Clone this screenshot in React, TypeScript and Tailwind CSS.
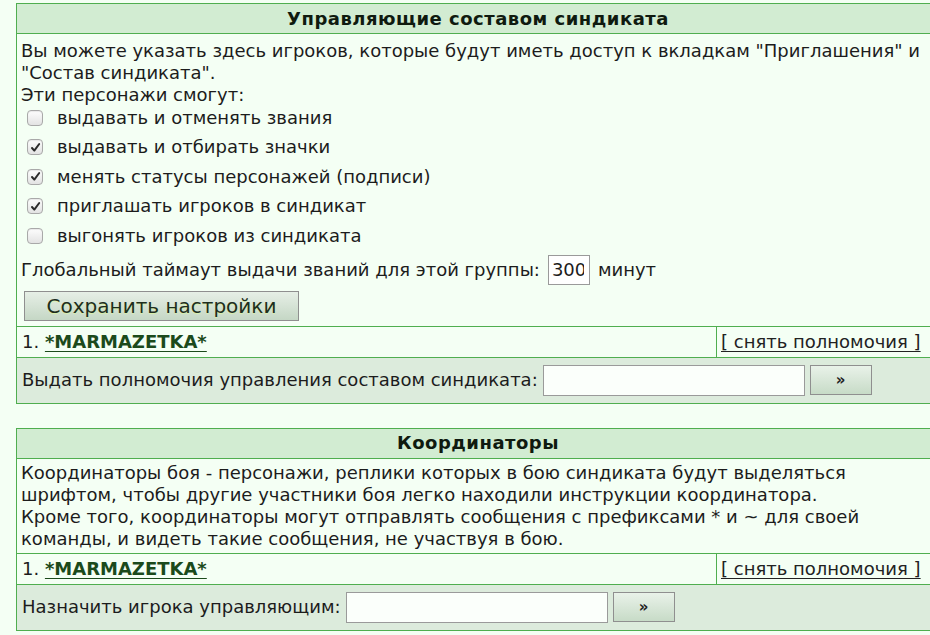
import React from "react";

const checks = [
  { label: "выдавать и отменять звания", on: false },
  { label: "выдавать и отбирать значки", on: true },
  { label: "менять статусы персонажей (подписи)", on: true },
  { label: "приглашать игроков в синдикат", on: true },
  { label: "выгонять игроков из синдиката", on: false },
];

const Checkbox = ({ on }: { on: boolean }) => (
  <span className="relative flex h-[16px] w-[16px] shrink-0 items-center justify-center rounded-[4px] border border-[#a9a9a9] bg-gradient-to-b from-[#fdfdfd] to-[#e3e3e3] shadow-[inset_0_1px_1px_rgba(0,0,0,0.08)]">
    {on && (
      <svg width="11" height="11" viewBox="0 0 11 11">
        <path
          d="M2 6 L4.3 8.6 L9.2 2"
          fill="none"
          stroke="#2b2b2b"
          strokeWidth="2"
          strokeLinecap="round"
          strokeLinejoin="round"
        />
      </svg>
    )}
  </span>
);

const Header = ({ title }: { title: string }) => (
  <div className="flex h-[30px] items-center justify-center border-b border-[#4fae4f] bg-[#d2ecd2] font-bold tracking-[0.5px] text-[#0f1a0f]">
    {title}
  </div>
);

const MemberRow = () => (
  <div className="flex h-[31px] border-b border-[#4fae4f]">
    <div className="flex flex-1 items-center border-r border-[#4fae4f] pl-[5px]">
      1.&nbsp;
      <a href="#" className="font-bold text-[#1b4a1b] underline underline-offset-[3px]">
        *MARMAZETKA*
      </a>
    </div>
    <div className="flex w-[222px] items-center pl-[4px]">
      <a href="#" className="whitespace-pre text-[#222] underline underline-offset-[3px]">
        [ снять полномочия ]
      </a>
    </div>
  </div>
);

const AddRow = ({ label }: { label: string }) => (
  <div className="flex h-[45px] items-center bg-[#dcebdc] pl-[5px]">
    <span>{label}</span>
    <span className="ml-[5px] h-[31px] w-[262px] border border-[#9a9a9a] bg-[#fbfffb]" />
    <button className="ml-[5px] flex h-[30px] w-[62px] items-center justify-center border border-[#8f8f8f] bg-gradient-to-b from-[#e9f2e9] to-[#c7dbc7] text-[15px] font-bold text-[#222]">
      »
    </button>
  </div>
);

export default function App() {
  return (
    <div
      className="min-h-[635px] overflow-hidden bg-[#f4fff4] pt-[3px] text-[18px] leading-[22px] text-[#1c1c1c]"
      style={{ fontFamily: '"DejaVu Sans", Verdana, sans-serif' }}
    >
      {/* Управляющие */}
      <div className="ml-[16px] w-[924px] border border-[#4fae4f]">
        <Header title="Управляющие составом синдиката" />
        <div className="border-b border-[#4fae4f] pb-[5px] pl-[4px] pr-[10px] pt-[6px]">
          <p>
            Вы можете указать здесь игроков, которые будут иметь доступ к вкладкам "Приглашения" и
            "Состав синдиката".
          </p>
          <p>Эти персонажи смогут:</p>
          <div className="-mt-[3px] flex flex-col">
            {checks.map((c) => (
              <div key={c.label} className="flex h-[29.5px] items-center gap-[14px] pl-[6px]">
                <Checkbox on={c.on} />
                <span>{c.label}</span>
              </div>
            ))}
          </div>
          <div className="mt-[4px] flex h-[30px] items-center">
            <span>Глобальный таймаут выдачи званий для этой группы:</span>
            <span className="ml-[8px] flex h-[30px] w-[42px] items-center border border-[#9a9a9a] bg-white pl-[3px]">
              <span className="w-[32px] overflow-hidden whitespace-nowrap">300</span>
            </span>
            <span className="ml-[8px]">минут</span>
          </div>
          <button className="ml-[3px] mt-[6px] flex h-[30px] w-[275px] items-center justify-center border border-[#8f8f8f] bg-gradient-to-b from-[#e6efe6] to-[#c5d7c5] text-[20px] text-[#1e2e1e] [text-shadow:0_1px_1px_#d9f2a8]">
            Сохранить настройки
          </button>
        </div>
        <MemberRow />
        <AddRow label="Выдать полномочия управления составом синдиката:" />
      </div>

      {/* Координаторы */}
      <div className="ml-[16px] mt-[24px] w-[924px] border border-[#4fae4f]">
        <Header title="Координаторы" />
        <div className="border-b border-[#4fae4f] pb-[3px] pl-[4px] pr-[10px] pt-[3px]">
          <p>
            Координаторы боя - персонажи, реплики которых в бою синдиката будут выделяться
            <br />
            шрифтом, чтобы другие участники боя легко находили инструкции координатора.
            <br />
            Кроме того, координаторы могут отправлять сообщения с префиксами * и ~ для своей
            <br />
            команды, и видеть такие сообщения, не участвуя в бою.
          </p>
        </div>
        <MemberRow />
        <AddRow label="Назначить игрока управляющим:" />
      </div>
    </div>
  );
}
